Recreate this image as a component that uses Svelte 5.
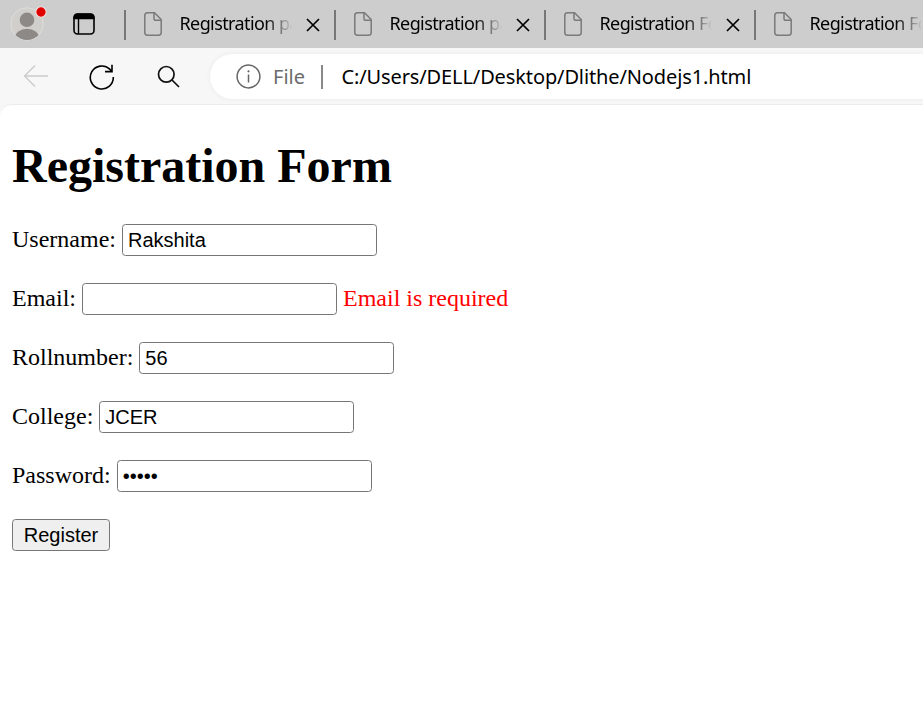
<script>
  const tabs = [
    { title: 'Registration page' },
    { title: 'Registration page' },
    { title: 'Registration Form' },
    { title: 'Registration Form' }
  ];
  const fields = [
    { label: 'Username:', type: 'text', value: 'Rakshita', error: '' },
    { label: 'Email:', type: 'text', value: '', error: 'Email is required' },
    { label: 'Rollnumber:', type: 'text', value: '56', error: '' },
    { label: 'College:', type: 'text', value: 'JCER', error: '' },
    { label: 'Password:', type: 'password', value: 'admin', error: '' }
  ];
</script>

<div class="window">
  <header class="tabbar">
    <svg class="avatar" width="40" height="44" viewBox="0 0 40 44">
      <defs><clipPath id="face"><circle cx="17" cy="24" r="16" /></clipPath></defs>
      <circle cx="17" cy="24" r="16.2" fill="#d0cfcb" stroke="#dfdedb" stroke-width="1" />
      <g clip-path="url(#face)" fill="#8c8986">
        <circle cx="17" cy="19.8" r="7.3" />
        <ellipse cx="17" cy="38" rx="12.2" ry="9.3" />
      </g>
      <circle cx="31" cy="12" r="5.2" fill="#e00000" stroke="#f3e4e4" stroke-width="1.1" />
    </svg>
    <svg class="layout" width="22" height="22" viewBox="0 0 22 22">
      <rect x="1" y="1" width="20" height="20" rx="3.5" fill="none" stroke="#000" stroke-width="1.6" />
      <path d="M.5 6.200V4.500Q.5 .5 4.500 .5H17.500Q21.500 .5 21.500 4.500V6.200Z" fill="#000" />
      <path d="M5.500 6V21" stroke="#000" stroke-width="1.400" />
    </svg>
    <div class="tabs">
      {#each tabs as tab}
        <div class="tab">
          <svg class="doc" width="18" height="24" viewBox="0 0 18 24" fill="none" stroke="#7a7a7a" stroke-width="1.5">
            <path d="M3.500 .8H10.500L17.200 7.500V20.500Q17.200 23.200 14.500 23.200H3.500Q.8 23.200 .8 20.500V3.500Q.8 .8 3.500 .8Z" />
            <path d="M10 .8V6.500Q10 8.300 11.800 8.300H17.300" />
          </svg>
          <span class="title">{tab.title}</span>
          <svg class="close" width="14" height="14" viewBox="0 0 14 14">
            <path d="M1 1L13 13M13 1L1 13" stroke="#000" stroke-width="1.7" />
          </svg>
        </div>
      {/each}
    </div>
  </header>

  <nav class="toolbar">
    <svg class="back" width="26" height="24" viewBox="0 0 26 24" fill="none" stroke="#ccc" stroke-width="1.4">
      <path d="M25 12H1.500M12 1.500L1.500 12L12 22.500" />
    </svg>
    <svg class="reload" width="26" height="26" viewBox="0 0 26 26" fill="none" stroke="#000" stroke-width="1.6">
      <path d="M24.300 13A11.500 11.500 0 1 1 20.800 5.200L23 7.600M23 .8V7.600H16" />
    </svg>
    <svg class="search" width="24" height="24" viewBox="0 0 24 24" fill="none" stroke="#111" stroke-width="1.7">
      <circle cx="9.300" cy="9.300" r="7.800" /><path d="M15 15L22 22" />
    </svg>
    <div class="address">
      <svg class="info" width="25" height="25" viewBox="0 0 25 25">
        <circle cx="12.500" cy="12.500" r="11.400" fill="none" stroke="#666" stroke-width="1.5" />
        <path d="M12.500 10.500V18.500" stroke="#666" stroke-width="1.5" />
        <circle cx="12.500" cy="7.300" r="1.100" fill="#666" />
      </svg>
      <span class="scheme">File</span>
      <span class="bar"></span>
      <span class="url">C:/Users/DELL/Desktop/Dlithe/Nodejs1.html</span>
    </div>
  </nav>

  <main>
    <h1>Registration Form</h1>
    <form>
      {#each fields as field}
        <label class="row">
          <span class="label">{field.label}</span>
          <input type={field.type} value={field.value} autocomplete="off" />
          {#if field.error}<span class="label error">{field.error}</span>{/if}
        </label>
      {/each}
      <button type="button">Register</button>
    </form>
  </main>
</div>

<style>
  :global(body) { margin: 0; overflow: hidden; }
  .window { width: 923px; height: 702px; overflow: hidden; background: #f7f7f7; display: flex; flex-direction: column; }
  svg { flex: none; display: block; }
  .tabbar { height: 48px; flex: none; display: flex; background: #cdcdcd; overflow: hidden; }
  .avatar { margin-left: 10px; }
  .layout { margin: 13px 0 0 23px; }
  .tabs { display: flex; margin-left: 29px; }
  .tab { width: 210px; height: 48px; flex: none; display: flex; align-items: center; }
  .tab::before { content: ''; width: 1.5px; height: 30px; background: #777; margin-top: 2px; flex: none; }
  .doc { margin-left: 18px; }
  .title {
    width: 112px; margin-left: 18px; padding-bottom: 2px; overflow: hidden; white-space: nowrap;
    font: 18px/28px "Noto Sans", sans-serif; letter-spacing: -0.6px; color: #000;
    -webkit-mask-image: linear-gradient(90deg, #000 76%, transparent 100%);
    mask-image: linear-gradient(90deg, #000 76%, transparent 100%);
  }
  .close { margin: 2px 0 0 14px; }
  .toolbar { height: 56px; flex: none; display: flex; align-items: center; }
  .back { margin-left: 23px; }
  .reload { margin: 1px 0 0 40px; }
  .search { margin: 2px 0 0 42px; }
  .address {
    flex: 1; min-width: 0; height: 45px; margin-left: 29px; display: flex; align-items: center;
    background: #fff; border-radius: 23px 0 0 23px; box-shadow: 0 0 5px #e9e9e9;
    font: 20px/28px "Noto Sans", sans-serif; color: #000; white-space: nowrap;
  }
  .info { margin-left: 26px; }
  .scheme { width: 32px; margin: 2px 0 0 12px; color: #6b6b6b; }
  .bar { width: 1.5px; height: 24px; margin: 1px 0 0 16px; background: #888; }
  .url { margin: 2px 0 0 19px; letter-spacing: -0.12px; }
  main {
    flex: 1; background: #fff; border-top: 1px solid #ececec; border-radius: 12px 0 0 0;
    padding-left: 12px; font: 24px/28px "Liberation Serif", serif; color: #000;
  }
  h1 { margin: 33px 0 31px; font-size: 48px; line-height: 55px; font-weight: bold; }
  .row { display: flex; align-items: center; height: 32px; margin-bottom: 27px; gap: 6px; white-space: nowrap; }
  .label { padding-bottom: 2px; }
  input {
    box-sizing: border-box; width: 255px; height: 32px; padding: 1px 5px; border: 1px solid #767676;
    border-radius: 3.500px; font: 20px "Liberation Sans", sans-serif; background: #fff; color: #000; margin: 0;
  }
  .error { color: #f00; }
  button {
    box-sizing: border-box; display: block; width: 98px; height: 32px; padding: 0; border: 1px solid #767676;
    border-radius: 3.500px; background: #efefef; color: #000; font: 20px "Liberation Sans", sans-serif;
  }
</style>
